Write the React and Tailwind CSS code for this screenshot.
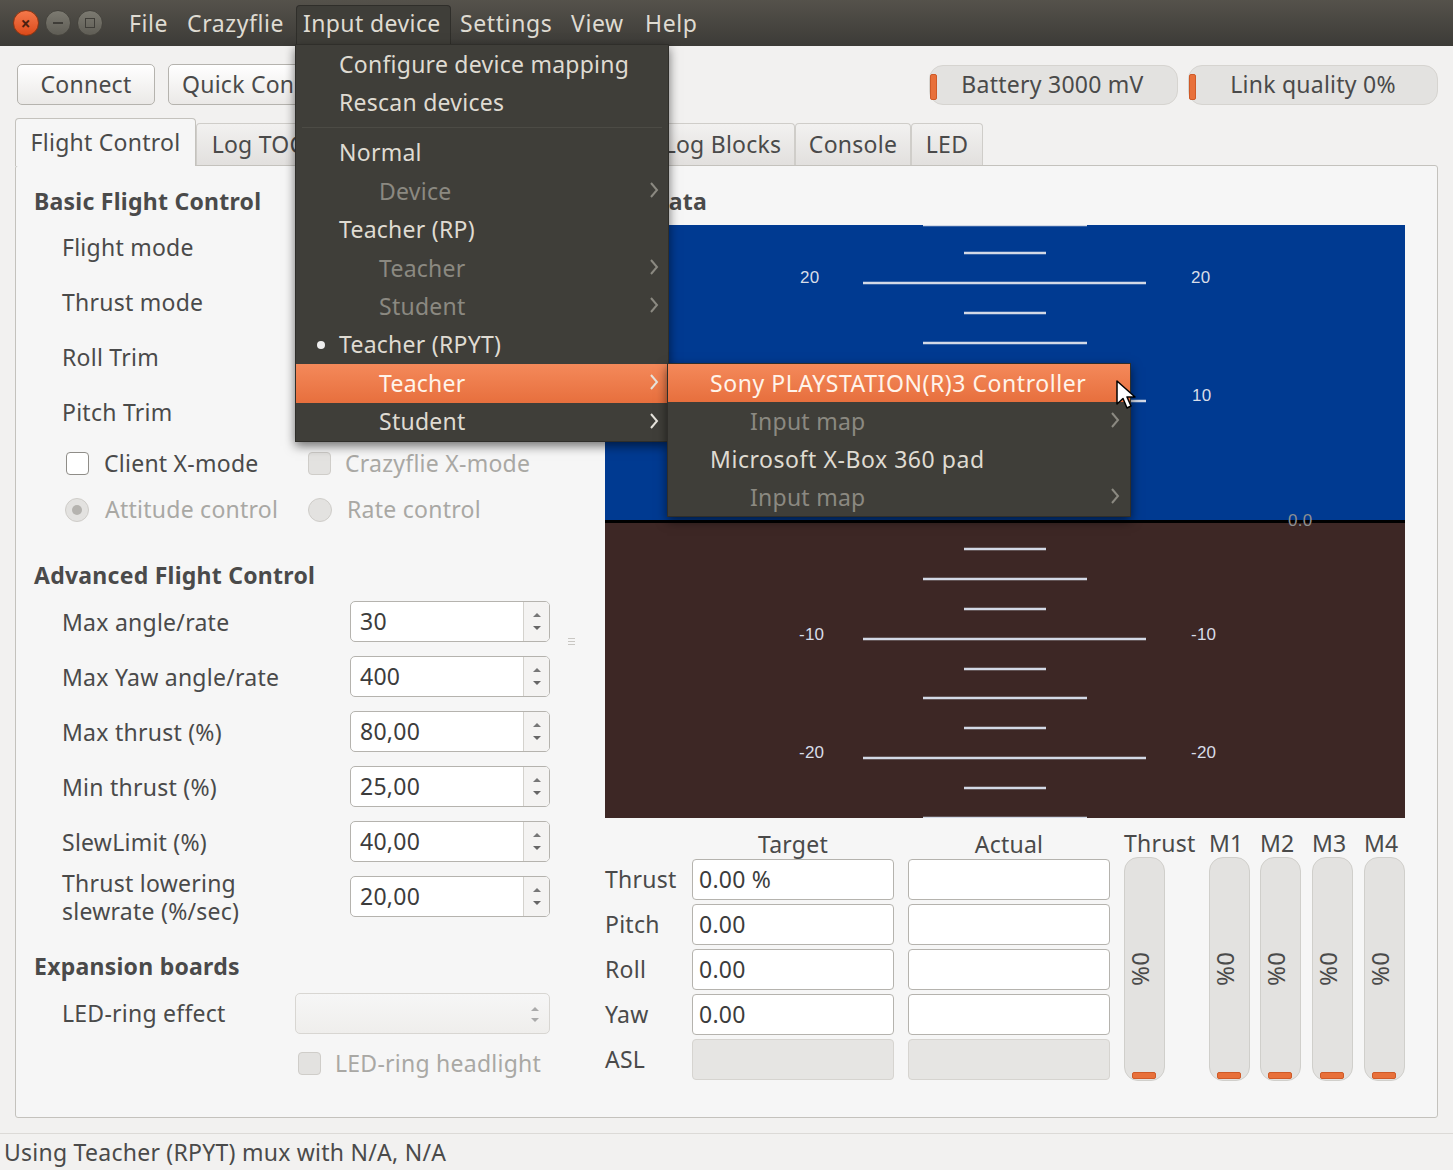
const FONT = { fontFamily: '"Noto Sans", "Open Sans", sans-serif' };

const TICKS = [
  [225, 'mid'], [253, 'short'], [283, 'long'], [313, 'short'], [343, 'mid'], [372, 'short'], [401, 'long'],
  [431, 'short'], [461, 'mid'], [491, 'short'],
  [549, 'short'], [579, 'mid'], [609, 'short'], [639, 'long'], [669, 'short'], [698, 'mid'], [728, 'short'],
  [758, 'long'], [788, 'short'], [818, 'mid'],
];
const TICK_X = { short: [359, 441], mid: [318, 482], long: [258, 541] };

const SPINS = [
  ['Max angle/rate', '30'],
  ['Max Yaw angle/rate', '400'],
  ['Max thrust (%)', '80,00'],
  ['Min thrust (%)', '25,00'],
  ['SlewLimit (%)', '40,00'],
  ['Thrust lowering\nslewrate (%/sec)', '20,00'],
];

const MENU = [
  { label: 'Configure device mapping' },
  { label: 'Rescan devices' },
  { sep: true },
  { label: 'Normal' },
  { label: 'Device', sub: true, disabled: true, arrow: true },
  { label: 'Teacher (RP)' },
  { label: 'Teacher', sub: true, disabled: true, arrow: true },
  { label: 'Student', sub: true, disabled: true, arrow: true },
  { label: 'Teacher (RPYT)', dot: true },
  { label: 'Teacher', sub: true, arrow: true, active: true },
  { label: 'Student', sub: true, arrow: true },
];

const SUBMENU = [
  { label: 'Sony PLAYSTATION(R)3 Controller', active: true, wide: true },
  { label: 'Input map', sub: true, disabled: true, arrow: true },
  { label: 'Microsoft X-Box 360 pad', wide: true },
  { label: 'Input map', sub: true, disabled: true, arrow: true },
];

function MenuRow({ item, left, subLeft, chevronRight, height }) {
  return (
    <div
      className={`relative flex items-center ${item.wide ? 'tracking-[0.55px]' : ''} ${
        item.active ? 'bg-gradient-to-b from-[#f4895a] to-[#e76f3d] text-[#fff4ea]' : item.disabled ? 'text-[#8b8981]' : 'text-[#dfdbd2]'
      }`}
      style={{ paddingLeft: item.sub ? subLeft : left, height }}
    >
      {item.dot && <span className="absolute left-[21px] top-[15px] w-[8px] h-[8px] rounded-full bg-[#eeeeee]" />}
      <span>{item.label}</span>
      {item.arrow && (
        <svg
          viewBox="0 0 10 18"
          className={`absolute top-[9px] w-[10px] h-[18px] ${item.disabled ? 'text-[#8b8981]' : 'text-[#e6e3dc]'}`}
          style={{ right: chevronRight }}
        >
          <path d="M2 2 L8 9 L2 16" fill="none" stroke="currentColor" strokeWidth="2" />
        </svg>
      )}
    </div>
  );
}

function SpinBox({ value }) {
  return (
    <div className="w-[200px] h-[41px] flex bg-white border border-[#b5b3ae] rounded-[5px] overflow-hidden">
      <div className="flex-1 flex items-center pl-[9px] text-[#3c3c3c]">{value}</div>
      <div className="w-[26px] flex flex-col items-center justify-center gap-[9px] border-l border-[#d4d2cd] bg-[#f4f3f2]">
        <span className="w-0 h-0 border-x-[4px] border-x-transparent border-b-[4px] border-b-[#777]" />
        <span className="w-0 h-0 border-x-[4px] border-x-transparent border-t-[4px] border-t-[#666]" />
      </div>
    </div>
  );
}

function Combo() {
  return (
    <div className="w-[200px] h-[41px] rounded-[5px] bg-gradient-to-b from-white to-[#ebe9e7] border border-[#b5b3ae]" />
  );
}

function Check({ disabled }) {
  return (
    <span className={`block w-[23px] h-[23px] rounded-[4px] border ${disabled ? 'bg-[#e3e2e0] border-[#cfcdc9]' : 'bg-white border-[#8f8d88]'}`} />
  );
}

function Radio({ checked }) {
  return (
    <span className="flex items-center justify-center w-[24px] h-[24px] rounded-full bg-[#e3e2e0] border border-[#cfcdc9]">
      {checked && <span className="w-[10px] h-[10px] rounded-full bg-[#b5b3af]" />}
    </span>
  );
}

function Field({ value, disabled }) {
  return (
    <div className={`w-[202px] h-[41px] flex items-center pl-[6px] rounded-[4px] border ${disabled ? 'bg-[#e6e5e3] border-[#d6d4d0]' : 'bg-white border-[#b5b3ae]'} text-[#3c3c3c]`}>
      {value}
    </div>
  );
}

function Meter() {
  return (
    <div className="relative w-[41px] h-[224px] flex items-center justify-center rounded-[14px] bg-[#e3e2e0] border border-[#d0cfcb] text-[#4a4a4a]">
      <span className="[writing-mode:vertical-rl] mr-[8px] text-[24px]">0%</span>
      <span className="absolute left-[7px] bottom-[1px] w-[24px] h-[7px] rounded-[2px] bg-[#e8703a] border border-[#cf5a28]" />
    </div>
  );
}

function Pill({ children, className }) {
  return (
    <div className={`relative h-[40px] flex items-center justify-center rounded-[14px] bg-[#e3e2e0] border border-[#d6d4d0] text-[#4a4a4a] ${className}`}>
      <span className="absolute left-0 top-[8px] w-[7px] h-[26px] rounded-[2px] bg-[#e8703a] border border-[#cf5a28]" />
      {children}
    </div>
  );
}

function Tab({ label, className }) {
  return (
    <div className={`h-[42px] flex items-center justify-center border border-b-0 border-[#cfcdc9] rounded-t-[4px] bg-gradient-to-b from-[#f2f1f0] to-[#e2e0de] text-[#4a4a4a] ${className}`}>
      {label}
    </div>
  );
}

export default function App() {
  return (
    <div className="relative w-[1453px] h-[1170px] overflow-hidden bg-[#f2f1f0] text-[23px] tracking-[0.25px] text-[#4a4a4a] leading-none" style={FONT}>
      {/* Title and menu bar */}
      <div className="h-[46px] flex items-center bg-gradient-to-b from-[#55524b] to-[#3c3b37] text-[#dfdbd2] tracking-[0.6px]">
        <div className="flex items-center gap-[6px] ml-[13px] w-[116px]">
          <span className="w-[26px] h-[26px] rounded-full bg-gradient-to-b from-[#f4784a] to-[#dc4a18] border border-[#8e3512] flex items-center justify-center text-[17px] font-bold text-[#4b2010]">×</span>
          <span className="w-[26px] h-[26px] rounded-full bg-gradient-to-b from-[#7c7a71] to-[#5f5d55] border border-[#45433d] flex items-center justify-center"><span className="w-[10px] h-[2px] bg-[#3f3d38]" /></span>
          <span className="w-[26px] h-[26px] rounded-full bg-gradient-to-b from-[#7c7a71] to-[#5f5d55] border border-[#45433d] flex items-center justify-center"><span className="w-[10px] h-[10px] border border-[#3f3d38]" /></span>
        </div>
        <span className="w-[58px]">File</span>
        <span className="w-[109px]">Crazyflie</span>
        <span className="w-[155px] h-[41px] mt-[5px] pb-[5px] flex items-center pl-[6px] tracking-[0.4px] rounded-t-[4px] bg-[#3f3e39] border border-b-0 border-[#2f2e2a]">Input device</span>
        <span className="ml-[9px] w-[111px]">Settings</span>
        <span className="w-[74px]">View</span>
        <span>Help</span>
      </div>

      {/* Toolbar */}
      <div className="h-[72px] flex items-center px-[15px] pt-[5px]">
        <button className="w-[138px] h-[41px] ml-[2px] rounded-[5px] border border-[#b5b3ae] bg-gradient-to-b from-white to-[#ebe9e7]">Connect</button>
        <button className="w-[180px] h-[41px] ml-[13px] pl-[13px] text-left rounded-[5px] border border-[#b5b3ae] bg-gradient-to-b from-white to-[#ebe9e7] whitespace-nowrap overflow-hidden">Quick Connect</button>
        <div className="flex-1" />
        <Pill className="w-[249px]"><span className="ml-[-2px]">Battery 3000 mV</span></Pill>
        <Pill className="w-[250px] ml-[10px]"><span>Link quality 0%</span></Pill>
      </div>

      {/* Tabs */}
      <div className="h-[47px] flex items-end pl-[15px]">
        <div className="w-[181px] h-[48px] flex items-center justify-center border border-b-0 border-[#c4c2bd] rounded-t-[4px] bg-[#f6f6f6] relative z-10 -mb-[1px]">Flight Control</div>
        <Tab label="Log TOC" className="w-[124px]" />
        <Tab className="w-[130px]" />
        <Tab className="w-[200px]" />
        <Tab label="Log Blocks" className="w-[145px]" />
        <Tab label="Console" className="w-[116px]" />
        <Tab label="LED" className="w-[72px]" />
      </div>

      {/* Flight control panel */}
      <div className="mx-[15px] w-[1423px] h-[953px] flex items-center border border-[#c4c2bd] rounded-[3px] bg-[#f6f6f6] pl-[18px]">
        <div className="w-[516px] h-full flex flex-col">
          <div className="h-[28px] mt-[21px] flex items-center font-bold">Basic Flight Control</div>
          {['Flight mode', 'Thrust mode', 'Roll Trim', 'Pitch Trim'].map((label, i) => (
            <div key={label} className={`h-[55px] flex items-center justify-between pl-[28px] ${i === 0 ? 'mt-[5px]' : ''}`}>
              <span>{label}</span>
              {i < 2 ? <Combo /> : <SpinBox />}
            </div>
          ))}
          <div className="h-[46px] flex items-center pl-[32px]">
            <Check />
            <span className="ml-[15px] w-[204px]">Client X-mode</span>
            <Check disabled />
            <span className="ml-[14px] text-[#a9a8a4]">Crazyflie X-mode</span>
          </div>
          <div className="h-[47px] flex items-center pl-[31px] text-[#a9a8a4]">
            <Radio checked />
            <span className="ml-[16px] w-[203px] whitespace-nowrap">Attitude control</span>
            <Radio />
            <span className="ml-[15px]">Rate control</span>
          </div>
          <div className="h-[28px] mt-[28px] flex items-center font-bold">Advanced Flight Control</div>
          <div className="mt-[5px]">
            {SPINS.map(([label, value]) => (
              <div key={label} className="h-[55px] flex items-center justify-between pl-[28px]">
                <span className="whitespace-pre-line leading-[28px]">{label}</span>
                <SpinBox value={value} />
              </div>
            ))}
          </div>
          <div className="h-[28px] mt-[28px] flex items-center font-bold">Expansion boards</div>
          <div className="h-[54px] mt-[6px] flex items-center justify-between pl-[28px]">
            <span>LED-ring effect</span>
            <div className="relative w-[255px] h-[41px] rounded-[5px] border border-[#d8d6d2] bg-gradient-to-b from-[#f6f6f6] to-[#efeeec]">
              <span className="absolute right-[10px] top-[13px] w-0 h-0 border-x-[4px] border-x-transparent border-b-[4px] border-b-[#aaa]" />
              <span className="absolute right-[10px] top-[24px] w-0 h-0 border-x-[4px] border-x-transparent border-t-[4px] border-t-[#aaa]" />
            </div>
          </div>
          <div className="h-[46px] flex items-center pl-[264px] text-[#a9a8a4]">
            <Check disabled />
            <span className="ml-[14px]">LED-ring headlight</span>
          </div>
        </div>

        {/* Splitter grip */}
        <div className="w-[55px] pl-[18px] flex flex-col gap-[2px]">
          <span className="w-[7px] h-[1px] bg-[#c9c7c3]" />
          <span className="w-[7px] h-[1px] bg-[#c9c7c3]" />
          <span className="w-[7px] h-[1px] bg-[#c9c7c3]" />
        </div>

        <div className="w-[800px] h-full flex flex-col">
          <div className="h-[28px] mt-[21px] ml-[-27px] flex items-center font-bold">Flight Data</div>
          <svg viewBox="0 0 800 593" className="block w-[800px] h-[593px] mt-[10px]">
            <rect width="800" height="296" fill="#003a91" />
            <rect y="296" width="800" height="297" fill="#3d2725" />
            <rect y="295" width="800" height="3" fill="#000000" />
            {TICKS.map(([y, kind]) => (
              <line key={y} x1={TICK_X[kind][0]} x2={TICK_X[kind][1]} y1={y - 225} y2={y - 225} stroke="#d3d9e6" strokeWidth="2.5" />
            ))}
            <g fill="#d8dde8" fontSize="17" fontFamily='"Liberation Sans", sans-serif'>
              <text x="195" y="58">20</text>
              <text x="586" y="58">20</text>
              <text x="587" y="176">10</text>
              <text x="194" y="415">-10</text>
              <text x="586" y="415">-10</text>
              <text x="194" y="533">-20</text>
              <text x="586" y="533">-20</text>
              <text x="683" y="301" fill="#8e8f92">0.0</text>
            </g>
          </svg>
          <div className="flex mt-[12px]">
            <div className="w-[519px]">
              <div className="h-[29px] flex items-center pl-[87px]">
                <span className="w-[202px] text-center">Target</span>
                <span className="w-[202px] ml-[14px] text-center">Actual</span>
              </div>
              <div className="flex flex-col gap-[4px]">
                {[['Thrust', '0.00 %'], ['Pitch', '0.00'], ['Roll', '0.00'], ['Yaw', '0.00'], ['ASL', '']].map(([label, value]) => (
                  <div key={label} className="flex items-center">
                    <span className="w-[87px]">{label}</span>
                    <Field value={value} disabled={label === 'ASL'} />
                    <div className="ml-[14px]"><Field disabled={label === 'ASL'} /></div>
                  </div>
                ))}
              </div>
            </div>
            {[['Thrust', 'w-[85px]'], ['M1', 'w-[51px]'], ['M2', 'w-[52px]'], ['M3', 'w-[52px]'], ['M4', 'w-[41px]']].map(([label, width]) => (
              <div key={label} className={width}>
                <div className="h-[27px] flex items-center whitespace-nowrap">{label}</div>
                <Meter />
              </div>
            ))}
          </div>
        </div>
      </div>

      {/* Status bar */}
      <div className="mt-[15px] h-[37px] flex items-center pl-[4px] border-t border-[#dcdad7]">Using Teacher (RPYT) mux with N/A, N/A</div>

      {/* Input device menu */}
      <div className="absolute z-20 left-[295px] top-[44px] w-[374px] bg-[#3f3e39] border border-[#2f2e2a] shadow-[0_4px_10px_rgba(0,0,0,0.55)]">
        {MENU.map((item, i) =>
          item.sep ? (
            <div key={i} className="h-[14px] mt-[-1px] mb-[-1px] flex items-center px-[6px]"><div className="w-full h-[1px] bg-[#4c4b45]" /></div>
          ) : (
            <MenuRow key={i} item={item} left={43} subLeft={83} chevronRight={9} height={38.4} />
          )
        )}
      </div>

      {/* Teacher submenu */}
      <div className="absolute z-30 left-[667px] top-[363px] w-[464px] bg-[#3f3e39] border border-[#2f2e2a] shadow-[0_4px_10px_rgba(0,0,0,0.55)]">
        {SUBMENU.map((item, i) => (
          <MenuRow key={i} item={item} left={42} subLeft={82} chevronRight={10} height={38} />
        ))}
      </div>

      {/* Mouse pointer */}
      <svg viewBox="0 0 20 32" className="absolute z-40 left-[1116px] top-[380px] w-[20px] h-[32px]">
        <path d="M1 1 L1 24 L7 18.5 L11 28 L15 26 L11 17 L19 17 Z" fill="#ffffff" stroke="#000000" strokeWidth="1.5" strokeLinejoin="round" />
      </svg>
    </div>
  );
}
